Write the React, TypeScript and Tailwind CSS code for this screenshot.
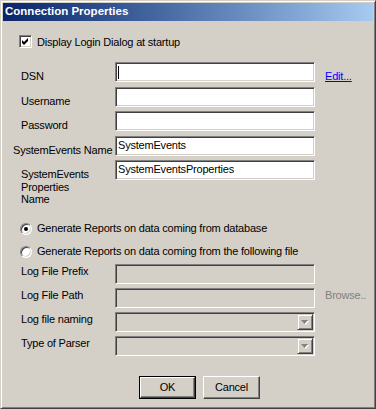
const sunken =
  "border border-t-[#808080] border-l-[#808080] border-b-white border-r-white shadow-[inset_1px_1px_#404040,inset_-1px_-1px_#d4d0c8]";
const raised =
  "border border-t-white border-l-white border-b-[#404040] border-r-[#404040] shadow-[inset_-1px_-1px_#808080]";

function Field({ value, disabled, caret, combo }: { value?: string; disabled?: boolean; caret?: boolean; combo?: boolean }) {
  return (
    <div className={`${sunken} w-[200px] h-[20px] flex ${disabled ? "bg-[#d4d0c8]" : "bg-white"}`}>
      <div className="flex-1 pl-[2px] pt-[2px] leading-[13px] whitespace-nowrap">
        {caret && <div className="w-px h-[13px] bg-black mt-[1px]" />}
        {value}
      </div>
      {combo && (
        <div className="mt-px mr-px w-[16px] h-[16px] flex items-center justify-center border border-t-[#d4d0c8] border-l-[#d4d0c8] border-b-[#404040] border-r-[#404040] shadow-[inset_1px_1px_white,inset_-1px_-1px_#808080] bg-[#d4d0c8]">
          <svg width="8" height="5" viewBox="0 0 8 5">
            <polygon points="1,1 8,1 4.5,5" fill="#ffffff" />
            <polygon points="0,0 7,0 3.5,4" fill="#808080" />
          </svg>
        </div>
      )}
    </div>
  );
}

function Row({ label, children, top = false, lpad = "pl-[18px]" }: { label: React.ReactNode; children: React.ReactNode; top?: boolean; lpad?: string }) {
  return (
    <div className="flex">
      <div className={`w-[112px] ${lpad} ${top ? "pt-[1px]" : "pt-[8px]"} leading-[12.5px] whitespace-nowrap`}>{label}</div>
      {children}
    </div>
  );
}

function Radio({ checked }: { checked?: boolean }) {
  return (
    <div className="w-[12px] h-[12px] rounded-full border border-t-[#808080] border-l-[#808080] border-b-white border-r-white shadow-[inset_1px_1px_#404040,inset_-1px_-1px_#d4d0c8] bg-white flex items-center justify-center">
      {checked && <div className="w-[4px] h-[4px] rounded-full bg-black" />}
    </div>
  );
}

export default function App() {
  return (
    <div className="w-[376px] h-[409px] bg-[#d4d0c8] p-[2px] border border-t-[#d4d0c8] border-l-[#d4d0c8] border-b-[#404040] border-r-[#404040] shadow-[inset_1px_1px_white,inset_-1px_-1px_#808080] font-['Liberation_Sans',Arial,sans-serif] text-[11px] tracking-[-0.2px] text-black flex flex-col">
      <div className="h-[18px] bg-linear-to-r from-[#0a246a] to-[#a6caf0] flex items-center pl-[2px] text-white font-bold text-[11.5px] tracking-normal">
        Connection Properties
      </div>

      <div className="flex items-center mt-[14px] ml-[16px] h-[13px]">
        <div className={`${sunken} w-[13px] h-[13px] bg-white flex items-center justify-center`}>
          <svg width="7" height="7" viewBox="0 0 7 7">
            <polygon points="0,2 2,4 6,0 6,3 2,7 0,5" fill="#000" />
          </svg>
        </div>
        <span className="ml-[5px] leading-[13px] pt-[1px]">Display Login Dialog at startup</span>
      </div>

      <div className="mt-[14px] flex flex-col gap-[4px]">
        <div className="flex">
          <div className="w-[112px] pl-[18px] pt-[8px] leading-[12.5px]">DSN</div>
          <Field caret />
          <span className="ml-[10px] pt-[8px] leading-[12.5px] text-[#0000ff] underline">Edit...</span>
        </div>
        <Row label="Username">
          <Field />
        </Row>
        <Row label="Password">
          <Field />
        </Row>
        <Row label="SystemEvents Name" lpad="pl-[10px]">
          <Field value="SystemEvents" />
        </Row>
        <div className="h-[46px]">
          <Row
            label={
              <>
                SystemEvents
                <br />
                Properties
                <br />
                Name
              </>
            }
          >
            <Field value="SystemEventsProperties" />
          </Row>
        </div>
      </div>

      <div className="flex items-center mt-[16px] ml-[17px] h-[13px]">
        <Radio checked />
        <span className="ml-[5px] leading-[13px]">Generate Reports on data coming from database</span>
      </div>
      <div className="flex items-center mt-[10px] ml-[17px] h-[13px]">
        <Radio />
        <span className="ml-[5px] leading-[13px]">Generate Reports on data coming from the following file</span>
      </div>

      <div className="mt-[6px] flex flex-col gap-[4px]">
        <Row label="Log File Prefix" top>
          <Field disabled />
        </Row>
        <div className="flex">
          <div className="w-[112px] pl-[18px] pt-[1px] leading-[12.5px]">Log File Path</div>
          <Field disabled />
          <span className="ml-[10px] pt-[1px] leading-[12.5px] text-[#808080]">Browse..</span>
        </div>
        <Row label="Log file naming" top>
          <Field disabled combo />
        </Row>
        <Row label="Type of Parser" top>
          <Field disabled combo />
        </Row>
      </div>

      <div className="mt-[20px] ml-[136px] flex gap-[7px]">
        <div className="w-[57px] h-[23px] border border-black">
          <div className={`${raised} w-full h-full flex items-center justify-center leading-[13px]`}>OK</div>
        </div>
        <div className={`${raised} w-[57px] h-[23px] flex items-center justify-center leading-[13px]`}>Cancel</div>
      </div>
    </div>
  );
}
